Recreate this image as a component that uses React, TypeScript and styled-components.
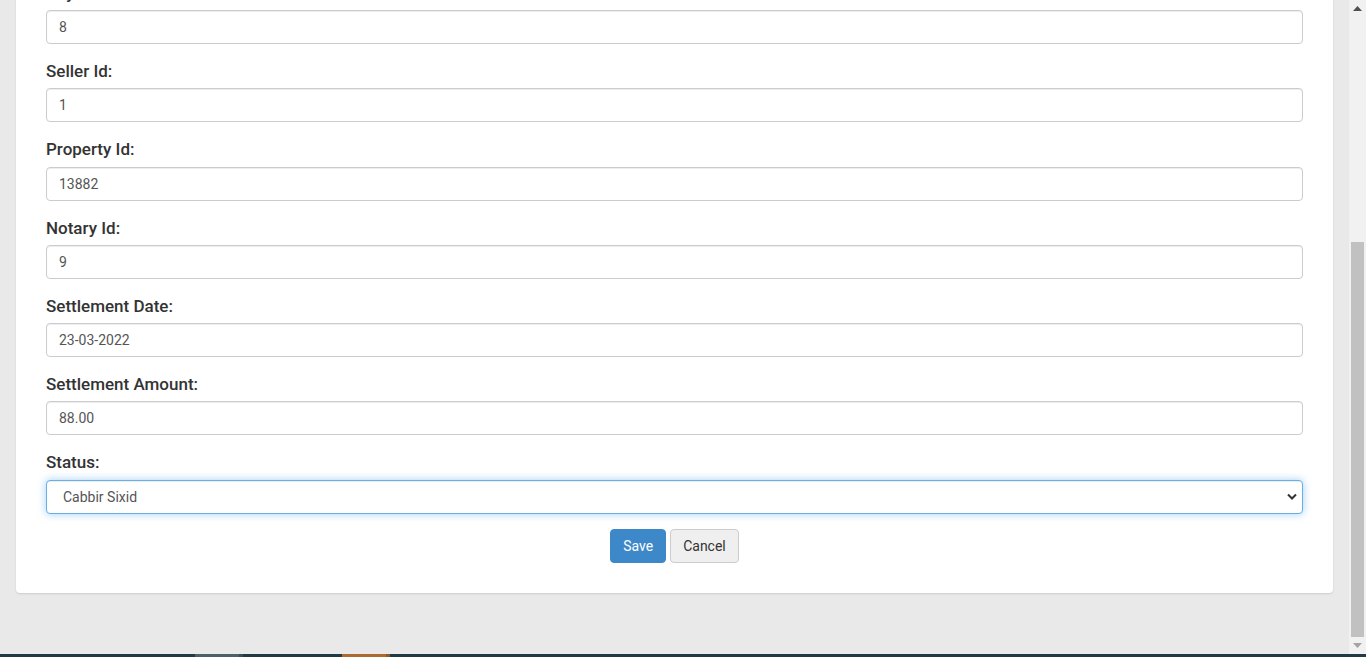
import React from 'react';
import styled, { createGlobalStyle } from 'styled-components';

const GlobalStyle = createGlobalStyle`
  html, body {
    margin: 0;
    padding: 0;
    overflow: hidden;
    background: #e9e9e9;
    font-family: Roboto, "Liberation Sans", Arial, sans-serif;
  }
  * { box-sizing: border-box; }
`

const Screen = styled.div`
  width: 1366px;
  height: 657px;
  display: flex;
  flex-direction: column;
`

const Body = styled.div`
  display: flex;
  height: 654px;
`

const Viewport = styled.div`
  flex: 1;
  overflow: hidden;
  background: #e9e9e9;
`

const Card = styled.div`
  margin: -49.3px 16px 0 16px;
  padding: 30px 30px 30px;
  background: #fff;
  border-radius: 4px;
  box-shadow: 0 1px 2px rgba(0, 0, 0, 0.12);
`

const Group = styled.div`
  margin-bottom: 15px;
`

const Label = styled.label`
  display: block;
  margin-bottom: 5px;
  font-size: 17px;
  line-height: 1.42857;
  font-weight: 500;
  color: #333;
`

const Input = styled.input`
  display: block;
  width: 100%;
  height: 34px;
  padding: 6px 12px;
  font-family: inherit;
  font-size: 14px;
  color: #555;
  background: #fff;
  border: 1px solid #ccc;
  border-radius: 4px;
  box-shadow: inset 0 1px 1px rgba(0, 0, 0, 0.075);
  outline: none;
`

const SelectWrap = styled.div`
  position: relative;
`

const Select = styled.select`
  display: block;
  width: 100%;
  height: 34px;
  padding: 6px 16px;
  font-family: inherit;
  font-size: 14px;
  color: #555;
  background: #fff;
  border: 1px solid #66afe9;
  border-radius: 4px;
  box-shadow: inset 0 1px 1px rgba(0, 0, 0, 0.075), 0 0 8px rgba(102, 175, 233, 0.6);
  appearance: none;
  outline: none;
`

const Chevron = styled.svg`
  position: absolute;
  right: 6px;
  top: 13px;
  pointer-events: none;
`

const Actions = styled.div`
  text-align: center;
  font-size: 0;
`

const Button = styled.button<{ $primary?: boolean }>`
  display: inline-block;
  height: 34px;
  padding: 6px 12px;
  margin: 0 2px;
  font-family: inherit;
  font-size: 14px;
  line-height: 20px;
  border-radius: 4px;
  cursor: pointer;
  color: ${p => (p.$primary ? '#fff' : '#333')};
  background: ${p => (p.$primary ? '#3d88c9' : '#efefef')};
  border: 1px solid ${p => (p.$primary ? '#3d88c9' : '#ccc')};
`

const Scrollbar = styled.div`
  width: 17px;
  background: #f1f1f1;
  display: flex;
  flex-direction: column;
  align-items: center;
`

const Arrow = styled.div`
  height: 17px;
  display: flex;
  align-items: center;
  justify-content: center;
`

const Track = styled.div`
  flex: 1;
  width: 100%;
  display: flex;
  flex-direction: column;
  padding-top: 225px;
  padding-bottom: 0;
`

const Thumb = styled.div`
  height: 395px;
  margin: 0 2px;
  background: #c1c1c1;
`

const Strip = styled.div`
  height: 3px;
  display: flex;
  background: #213b44;
`

const StripPart = styled.div<{ $w: number; $c: string }>`
  width: ${p => p.$w}px;
  background: ${p => p.$c};
`

const fields = [
  { label: 'Buyer Id:', value: '8' },
  { label: 'Seller Id:', value: '1' },
  { label: 'Property Id:', value: '13882' },
  { label: 'Notary Id:', value: '9' },
  { label: 'Settlement Date:', value: '23-03-2022' },
  { label: 'Settlement Amount:', value: '88.00' },
];

const App = (): JSX.Element => (
  <Screen>
    <GlobalStyle />
    <Body>
      <Viewport>
        <Card>
          {fields.map(f => (
            <Group key={f.label}>
              <Label>{f.label}</Label>
              <Input defaultValue={f.value} />
            </Group>
          ))}
          <Group>
            <Label>Status:</Label>
            <SelectWrap>
              <Select defaultValue="cabbir">
                <option value="cabbir">Cabbir Sixid</option>
              </Select>
              <Chevron width="10" height="8" viewBox="0 0 10 8">
                <path d="M1 1.5 L5 5.5 L9 1.5" fill="none" stroke="#333" strokeWidth="2" />
              </Chevron>
            </SelectWrap>
          </Group>
          <Actions>
            <Button $primary>Save</Button>
            <Button>Cancel</Button>
          </Actions>
        </Card>
      </Viewport>
      <Scrollbar>
        <Arrow>
          <svg width="9" height="5" viewBox="0 0 9 5"><path d="M0 5 L4.5 0 L9 5 Z" fill="#505050" /></svg>
        </Arrow>
        <Track>
          <Thumb />
        </Track>
        <Arrow>
          <svg width="9" height="5" viewBox="0 0 9 5"><path d="M0 0 L4.5 5 L9 0 Z" fill="#a3a3a3" /></svg>
        </Arrow>
      </Scrollbar>
    </Body>
    <Strip>
      <StripPart $w={195} $c="#213b44" />
      <StripPart $w={44} $c="#4d6067" />
      <StripPart $w={4} $c="#3b4d53" />
      <StripPart $w={99} $c="#213b44" />
      <StripPart $w={44} $c="#ac6a2f" />
      <StripPart $w={4} $c="#8a5830" />
    </Strip>
  </Screen>
);

export default App;
